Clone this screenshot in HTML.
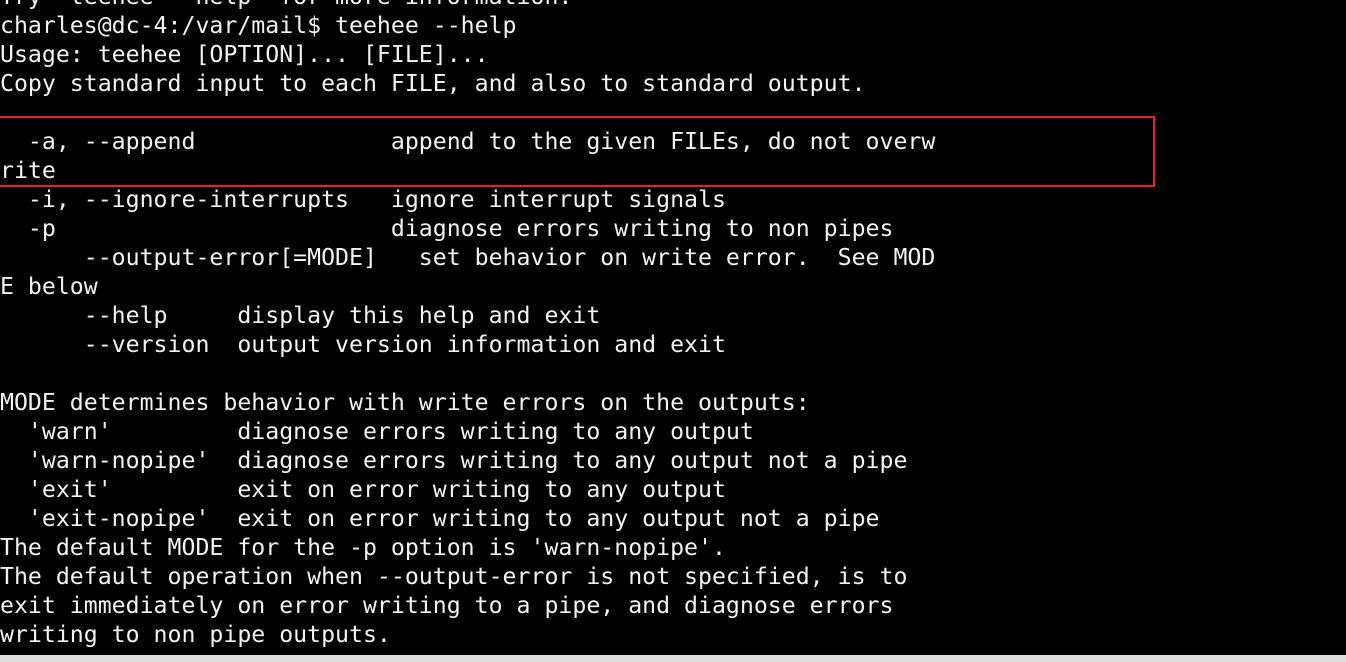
<!DOCTYPE html>
<html><head><meta charset="utf-8"><style>
html,body{margin:0;padding:0;background:#000;width:1346px;height:662px;overflow:hidden;position:relative}
pre{position:absolute;left:0;top:-18px;margin:0;font-family:"DejaVu Sans Mono","Liberation Mono",monospace;font-size:23.2px;line-height:29px;color:#f2f2f2}
.box{position:absolute;left:-2px;top:116px;width:1153px;height:67px;border:2px solid #e8202a}
.bar{position:absolute;left:0;top:655px;width:1346px;height:7px;background:#dedede}
</style></head><body>
<pre>Try 'teehee --help' for more information.
charles@dc-4:/var/mail$ teehee --help
Usage: teehee [OPTION]... [FILE]...
Copy standard input to each FILE, and also to standard output.

  -a, --append              append to the given FILEs, do not overw
rite
  -i, --ignore-interrupts   ignore interrupt signals
  -p                        diagnose errors writing to non pipes
      --output-error[=MODE]   set behavior on write error.  See MOD
E below
      --help     display this help and exit
      --version  output version information and exit

MODE determines behavior with write errors on the outputs:
  'warn'         diagnose errors writing to any output
  'warn-nopipe'  diagnose errors writing to any output not a pipe
  'exit'         exit on error writing to any output
  'exit-nopipe'  exit on error writing to any output not a pipe
The default MODE for the -p option is 'warn-nopipe'.
The default operation when --output-error is not specified, is to
exit immediately on error writing to a pipe, and diagnose errors
writing to non pipe outputs.</pre>
<div class="box"></div>
<div class="bar"></div>
</body></html>
